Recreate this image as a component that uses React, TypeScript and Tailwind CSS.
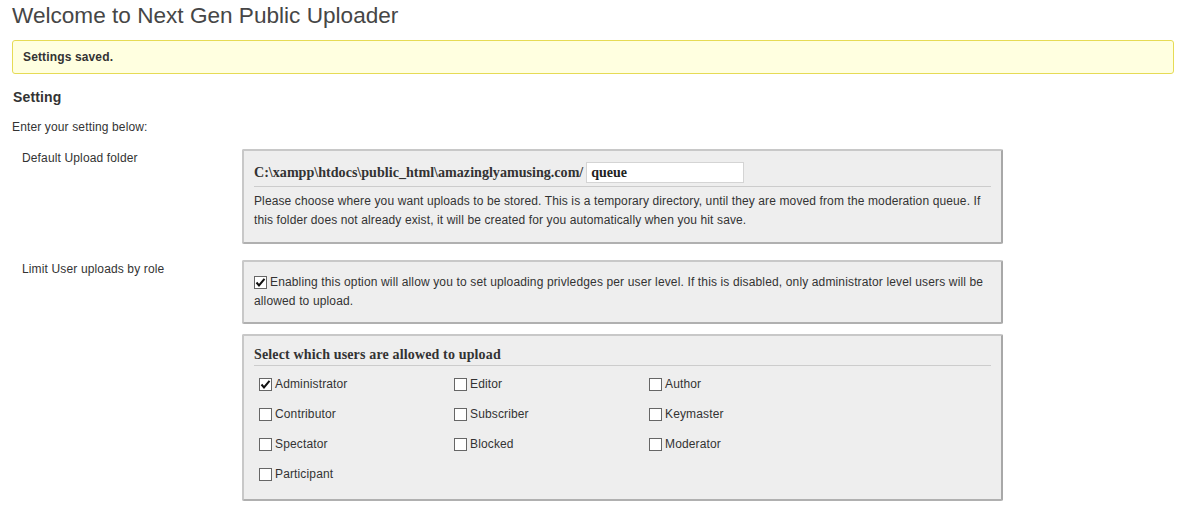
import React from "react";

const roles = [
  ["Administrator", true],
  ["Editor", false],
  ["Author", false],
  ["Contributor", false],
  ["Subscriber", false],
  ["Keymaster", false],
  ["Spectator", false],
  ["Blocked", false],
  ["Moderator", false],
  ["Participant", false],
] as const;

function Check({ checked }: { checked: boolean }) {
  return (
    <span className="inline-flex h-[13px] w-[13px] shrink-0 items-center justify-center border border-[#666] bg-white">
      {checked && (
        <svg viewBox="0 0 11 11" className="h-[11px] w-[11px]">
          <path d="M1.5 5.5 L4 8.5 L9.5 1.8" fill="none" stroke="#111" strokeWidth="2" />
        </svg>
      )}
    </span>
  );
}

function Box({ children, className = "" }: { children: React.ReactNode; className?: string }) {
  return (
    <div
      className={`w-[761px] rounded-[2px] border-2 border-t-[#c8c8c8] border-l-[#c8c8c8] border-r-[#a8a8a8] border-b-[#b0b0b0] bg-[#eeeeee] ${className}`}
    >
      {children}
    </div>
  );
}

export default function App() {
  return (
    <div className="min-h-[515px] bg-white px-3 font-['Liberation_Sans',Arial,sans-serif] text-[12px] tracking-[0.14px] text-[#333]">
      <h1 className="pt-[3px] text-[22.6px] leading-[26px] font-normal tracking-normal text-[#464646]">
        Welcome to Next Gen Public Uploader
      </h1>

      <div className="mt-[11px] w-[1162px] rounded-[3px] border border-[#e6db55] bg-[#ffffe0] px-[10px] py-[8px]">
        <p className="text-[12px] leading-[16px] font-bold text-[#333]">Settings saved.</p>
      </div>

      <h2 className="mt-[15px] pl-px text-[14px] leading-[16px] font-bold text-[#333]">Setting</h2>
      <p className="mt-[14px] leading-[16px]">Enter your setting below:</p>

      <div className="mt-[14px] flex">
        <div className="w-[230px] pl-[10px] pt-[1px] leading-[16px]">Default Upload folder</div>
        <Box className="pl-[10px] pr-[8px] pt-[11px] pb-[12px]">
          <div className="mr-[2px] flex items-center border-b border-[#cccccc] pb-[3px]">
            <span className="font-['Liberation_Serif','Times_New_Roman',serif] text-[14.1px] leading-[21px] font-bold tracking-normal text-[#333]">
              C:\xampp\htdocs\public_html\amazinglyamusing.com/
            </span>
            <div className="ml-[3px] h-[21px] w-[158px] border border-[#d4d4d4] bg-white px-[4px] font-['Liberation_Serif','Times_New_Roman',serif] text-[14px] leading-[19px] font-bold tracking-normal text-[#222]">
              queue
            </div>
          </div>
          <p className="mt-[5px] leading-[19px] tracking-[0.12px]">
            Please choose where you want uploads to be stored. This is a temporary directory, until they are moved
            from the moderation queue. If this folder does not already exist, it will be created for you
            automatically when you hit save.
          </p>
        </Box>
      </div>

      <div className="mt-[16px] flex">
        <div className="w-[230px] pl-[10px] pt-[1px] leading-[16px]">Limit User uploads by role</div>
        <Box className="px-[10px] pt-[11px] pb-[11px]">
          <p className="leading-[19px]">
            <span className="mr-[3px] inline-flex translate-y-[2px]">
              <Check checked />
            </span>
            Enabling this option will allow you to set uploading privledges per user level. If this is disabled, only
            administrator level users will be allowed to upload.
          </p>
        </Box>
      </div>

      <div className="mt-[10px] ml-[230px]">
        <Box className="px-[10px] pt-[10px] pb-[17px]">
          <div className="border-b border-[#cccccc] pb-[1px] font-['Liberation_Serif','Times_New_Roman',serif] text-[14px] leading-[18px] font-bold tracking-[0.15px] text-[#333]">
            Select which users are allowed to upload
          </div>
          <div className="mt-[10px] grid grid-cols-[195px_195px_1fr] gap-y-[14px] pl-[5px]">
            {roles.map(([name, on]) => (
              <label key={name} className="flex h-[16px] items-center gap-[3px] leading-[16px]">
                <Check checked={on} />
                <span>{name}</span>
              </label>
            ))}
          </div>
        </Box>
      </div>
    </div>
  );
}
